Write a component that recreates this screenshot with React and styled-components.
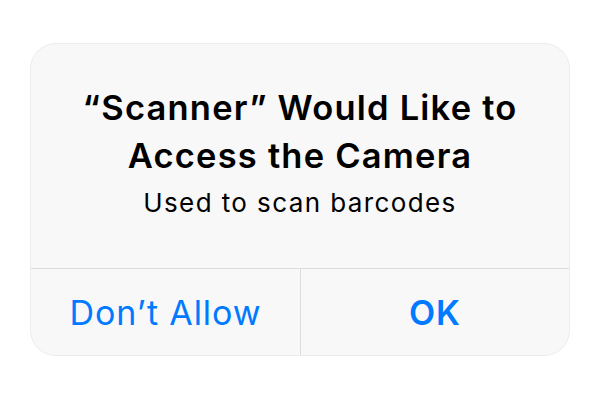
import React from "react";
import styled, { createGlobalStyle } from "styled-components";

const GlobalStyle = createGlobalStyle`
  html, body {
    margin: 0;
    padding: 0;
    background: #ffffff;
  }
  body {
    font-family: Inter, "Noto Sans", "Liberation Sans", sans-serif;
    -webkit-font-smoothing: antialiased;
  }
`;

const Page = styled.div`
  width: 600px;
  height: 400px;
  display: flex;
  justify-content: center;
  padding-top: 43px;
  box-sizing: border-box;
`;

const Alert = styled.div`
  width: 540px;
  height: 313px;
  box-sizing: border-box;
  background: #f8f8f8;
  border: 1px solid #ececec;
  border-radius: 26px;
  display: flex;
  flex-direction: column;
  overflow: hidden;
`;

const Body = styled.div`
  height: 224px;
  box-sizing: border-box;
  padding-top: 40px;
  text-align: center;
  color: #000;
`;

const Title = styled.h2`
  margin: 0;
  font-size: 34.5px;
  line-height: 48px;
  font-weight: 600;
  letter-spacing: 1.2px;
`;

const Message = styled.p`
  margin: 7px 0 0;
  font-size: 26px;
  line-height: 32px;
  font-weight: 400;
  letter-spacing: 1.4px;
`;

const Actions = styled.div`
  flex: 1;
  display: grid;
  grid-template-columns: 1fr 1fr;
  border-top: 1px solid #dcdcdc;
`;

const Action = styled.button`
  border: none;
  background: transparent;
  font-family: inherit;
  font-size: 34px;
  font-weight: ${({ $primary }) => ($primary ? 600 : 400)};
  letter-spacing: 0.9px;
  color: #007aff;
  padding: 0;
  cursor: pointer;
  & + & {
    border-left: 1px solid #dcdcdc;
  }
`;

export default function App() {
  return (
    <>
      <GlobalStyle />
      <Page>
        <Alert>
          <Body>
            <Title>
              “Scanner” Would Like to
              <br />
              Access the Camera
            </Title>
            <Message>Used to scan barcodes</Message>
          </Body>
          <Actions>
            <Action>Don’t Allow</Action>
            <Action $primary>OK</Action>
          </Actions>
        </Alert>
      </Page>
    </>
  );
}
